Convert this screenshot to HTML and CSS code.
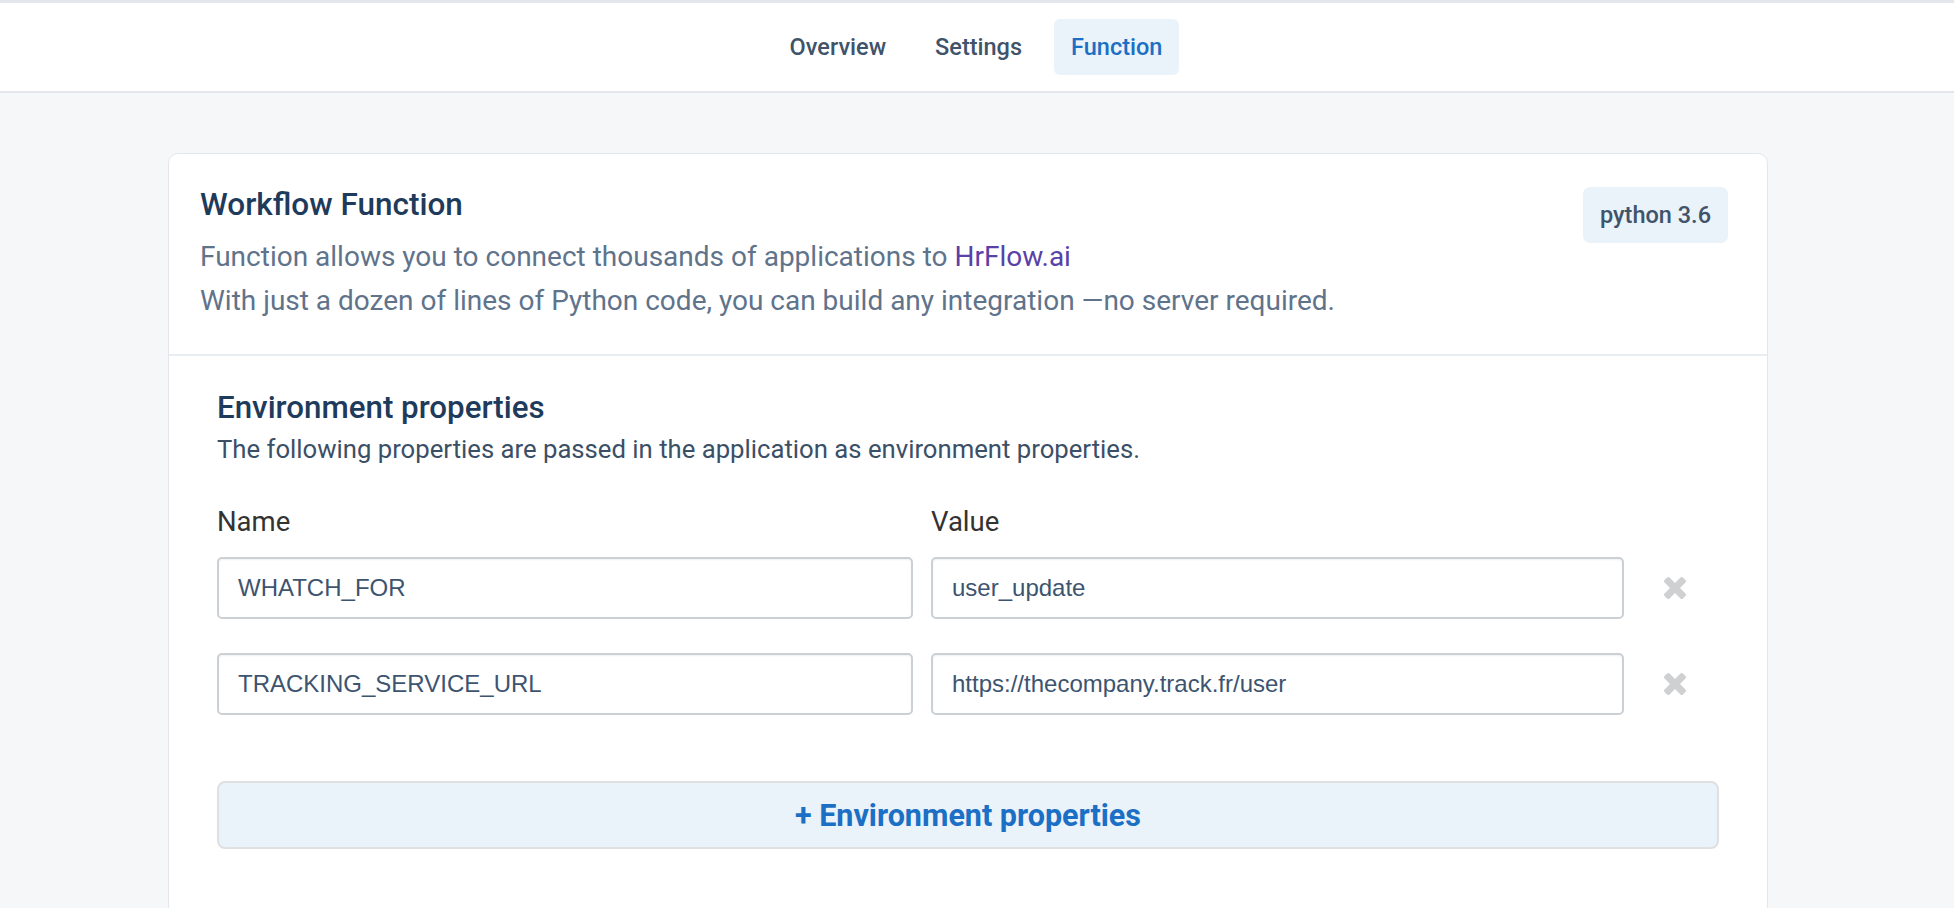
FILE: index.html
```html
<!DOCTYPE html>
<html lang="en">
<head>
<meta charset="utf-8">
<title>Workflow Function</title>
<link rel="stylesheet" href="styles.css">
</head>
<body>
<header class="topbar">
  <nav class="tabs">
    <a class="tab">Overview</a>
    <a class="tab">Settings</a>
    <a class="tab tab-active">Function</a>
  </nav>
</header>
<main class="main">
  <section class="card">
    <div class="card-head">
      <div class="head-text">
        <h1 class="card-title">Workflow Function</h1>
        <p class="desc">Function allows you to connect thousands of applications to <span class="brand">HrFlow.ai</span><br>With just a dozen of lines of Python code, you can build any integration —no server required.</p>
      </div>
      <span class="badge">python 3.6</span>
    </div>
    <div class="card-body">
      <h2 class="section-title">Environment properties</h2>
      <p class="section-sub">The following properties are passed in the application as environment properties.</p>
      <div class="grid">
        <div class="label">Name</div>
        <div class="label">Value</div>
        <div></div>
        <input class="field" type="text" value="WHATCH_FOR">
        <input class="field" type="text" value="user_update">
        <button class="remove" aria-label="remove"><svg viewBox="110 366 1188 1188" width="22" height="22"><path fill="currentColor" d="M1298 1322q0 40-28 68l-136 136q-28 28-68 28t-68-28l-294-294-294 294q-28 28-68 28t-68-28l-136-136q-28-28-28-68t28-68l294-294-294-294q-28-28-28-68t28-68l136-136q28-28 68-28t68 28l294 294 294-294q28-28 68-28t68 28l136 136q28 28 28 68t-28 68l-294 294 294 294q28 28 28 68z"/></svg></button>
        <input class="field" type="text" value="TRACKING_SERVICE_URL">
        <input class="field" type="text" value="https://thecompany.track.fr/user">
        <button class="remove" aria-label="remove"><svg viewBox="110 366 1188 1188" width="22" height="22"><path fill="currentColor" d="M1298 1322q0 40-28 68l-136 136q-28 28-68 28t-68-28l-294-294-294 294q-28 28-68 28t-68-28l-136-136q-28-28-28-68t28-68l294-294-294-294q-28-28-28-68t28-68l136-136q28-28 68-28t68 28l294 294 294-294q28-28 68-28t68 28l136 136q28 28 28 68t-28 68l-294 294 294 294q28 28 28 68z"/></svg></button>
      </div>
      <button class="add-btn">+ Environment properties</button>
    </div>
  </section>
</main>
</body>
</html>
```

FILE: styles.css
```css
* { box-sizing: border-box; }
html, body { margin: 0; padding: 0; }
body {
  background: #f6f7f9;
  font-family: Roboto, "Liberation Sans", Arial, sans-serif;
  height: 908px;
  overflow: hidden;
}
.topbar {
  background: #ffffff;
  border-top: 3px solid #e3e6ea;
  border-bottom: 2px solid #e3e6eb;
  height: 93px;
  display: flex;
  justify-content: center;
  align-items: center;
}
.tabs {
  display: flex;
  gap: 15px;
  margin-left: -2px;
}
.tab {
  height: 56px;
  padding: 0 17px;
  display: flex;
  align-items: center;
  font-size: 23.5px;
  font-weight: 500;
  color: #3f536b;
  border-radius: 6px;
  cursor: pointer;
}
.tab-active {
  background: #eaf2fa;
  color: #1b6fc4;
}
.main {
  padding: 60px 186px 0 168px;
}
.card {
  background: #ffffff;
  border: 1px solid #e3e7eb;
  border-radius: 10px;
  height: 800px;
}
.card-head {
  display: flex;
  justify-content: space-between;
  align-items: flex-start;
  padding: 33px 39px 31px 31px;
  border-bottom: 2px solid #e9eef3;
}
.card-title {
  margin: 0;
  font-size: 31.5px;
  line-height: 36px;
  font-weight: 500;
  color: #1f3b5b;
}
.desc {
  margin: 12px 0 0;
  font-size: 28px;
  line-height: 44px;
  color: #5f738b;
}
.brand { color: #5a41a8; }
.badge {
  background: #eaf2fa;
  border-radius: 7px;
  height: 56px;
  padding: 0 17px;
  display: flex;
  align-items: center;
  font-size: 23.5px;
  font-weight: 500;
  color: #3f536b;
}
.card-body {
  padding: 33px 48px 0 48px;
}
.section-title {
  margin: 0;
  font-size: 31.3px;
  line-height: 37px;
  font-weight: 500;
  color: #1f3b5b;
}
.section-sub {
  margin: 4px 0 0;
  font-size: 25.7px;
  line-height: 38px;
  color: #3b4f66;
}
.grid {
  margin-top: 35px;
  display: grid;
  grid-template-columns: 696px 693px 1fr;
  column-gap: 18px;
  row-gap: 34px;
  align-items: center;
}
.label {
  font-size: 27.5px;
  line-height: 38px;
  color: #333333;
  margin-bottom: -18px;
}
.field {
  height: 62px;
  width: 100%;
  border: 2px solid #cbd0d5;
  border-radius: 5px;
  box-shadow: inset 0 1px 2px rgba(0,0,0,0.06);
  padding: 0 19px;
  font-family: "Liberation Sans", Arial, sans-serif;
  font-size: 24px;
  color: #3d5470;
  background: #ffffff;
  outline: none;
}
.remove {
  justify-self: start;
  margin-left: 22px;
  background: none;
  border: none;
  padding: 0;
  color: #cfd0d2;
  display: flex;
  cursor: pointer;
}
.add-btn {
  margin-top: 66px;
  width: 100%;
  height: 68px;
  background: #eaf2fa;
  border: 2px solid #dfe0e1;
  border-radius: 8px;
  font-family: Roboto, "Liberation Sans", Arial, sans-serif;
  font-size: 30.5px;
  font-weight: 700;
  color: #1b6fc4;
  cursor: pointer;
}
```
